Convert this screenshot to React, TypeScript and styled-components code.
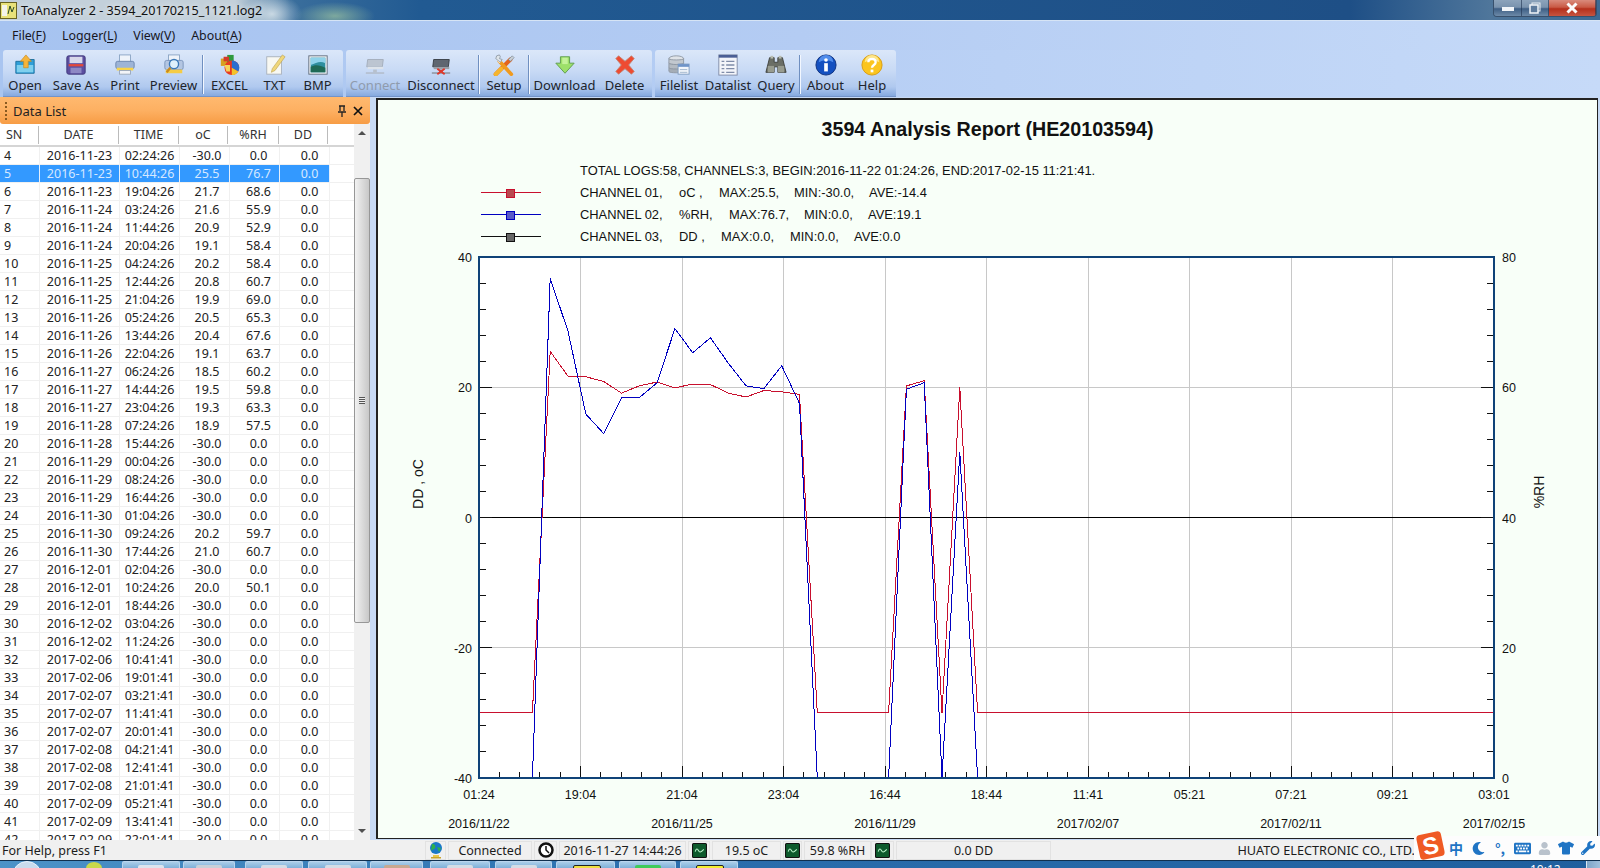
import React from "react";
import styled, { createGlobalStyle } from "styled-components";
import { FaMoon, FaKeyboard, FaTshirt, FaWrench, FaUser } from "react-icons/fa";

const GlobalStyle = createGlobalStyle`
	html, body {
		margin: 0;
		padding: 0;
		background: #c8daf5;
	}
	* {
		box-sizing: border-box;
	}
`;

const UI_FONT = `"Noto Sans", "Open Sans", sans-serif`;
const CHART_FONT = `"Liberation Sans", Arial, sans-serif`;

const Window = styled.div`
	width: 1600px;
	height: 868px;
	overflow: hidden;
	position: relative;
	display: flex;
	flex-direction: column;
	font-family: ${UI_FONT};
	font-size: 12.5px;
	color: #1c1c1c;
`;

const TitleBar = styled.div`
	height: 21px;
	flex: none;
	display: flex;
	align-items: flex-start;
	justify-content: space-between;
	padding: 0 3px 0 0;
	border-bottom: 1px solid #d6e4f5;
	background:
		radial-gradient(ellipse 40px 14px at 335px 16px, rgba(150, 190, 160, 0.75), transparent),
		radial-gradient(ellipse 30px 20px at 272px 14px, rgba(225, 235, 240, 0.8), transparent),
		linear-gradient(90deg, #c3d0da 0, #c3d0da 235px, #3a6e9c 290px, #215a92 420px, #1e4f86 1350px, #4f769b 1490px, #3d6a94 1600px);
`;

const TitleLeft = styled.div`
	display: flex;
	align-items: center;
	height: 20px;
	gap: 4px;
`;

const TitleText = styled.span`
	font-size: 12.6px;
	color: #111;
	text-shadow: 0 0 6px #fff;
	white-space: nowrap;
`;

const WindowButtons = styled.div`
	display: flex;
	height: 17px;
	border: 1px solid #38506c;
	border-top: none;
	border-radius: 0 0 4px 4px;
	overflow: hidden;
`;

const WindowButton = styled.div<{ $w: number; $close?: boolean }>`
	width: ${(p) => p.$w}px;
	display: flex;
	align-items: center;
	justify-content: center;
	border-right: 1px solid rgba(30, 50, 80, 0.6);
	background: ${(p) =>
		p.$close
			? "linear-gradient(#d98b7c 0, #c95a45 45%, #b5301c 55%, #c65440 100%)"
			: "linear-gradient(#8ca3bb 0, #7a93ae 45%, #3e5f85 55%, #6d8aa8 100%)"};
`;

const MenuBar = styled.div`
	height: 29px;
	flex: none;
	display: flex;
	align-items: center;
	padding-left: 12px;
	gap: 16px;
	background: linear-gradient(90deg, #a6c3f0 0, #b4ccf3 800px, #c6daf8 1600px);
`;

const MenuItem = styled.span`
	font-size: 12.4px;
	color: #17171f;
	u {
		text-underline-offset: 2px;
	}
`;

const ToolbarRow = styled.div`
	height: 47px;
	flex: none;
	display: flex;
	padding-left: 3px;
	gap: 3px;
	background: linear-gradient(90deg, #a9c5f0 0, #b6cef4 800px, #c6daf8 1600px);
`;

const Band = styled.div<{ $w: number }>`
	width: ${(p) => p.$w}px;
	height: 47px;
	display: flex;
	border-radius: 3px 3px 0 0;
	background: linear-gradient(#dbe7f9 0, #c8daf5 45%, #b0c9ef 80%, #86a9df 100%);
	border-bottom: 1px solid #7393c8;
`;

const ToolButton = styled.div<{ $w: number; $off?: boolean }>`
	width: ${(p) => p.$w}px;
	display: flex;
	flex-direction: column;
	align-items: center;
	padding-top: 4px;
	font-size: 13px;
	line-height: 18px;
	white-space: nowrap;
	color: ${(p) => (p.$off ? "#8f9bad" : "#20242c")};
	svg {
		display: block;
		flex: none;
	}
`;

const ToolSeparator = styled.div`
	width: 2px;
	margin: 5px 0 2px;
	flex: none;
	background: linear-gradient(90deg, #6f8fc0 50%, #f2f7ff 50%);
`;

const Main = styled.div`
	flex: 1;
	min-height: 0;
	display: flex;
	background: #c8daf5;
`;

const Sidebar = styled.div`
	width: 370px;
	flex: none;
	display: flex;
	flex-direction: column;
	background: #fff;
`;

const PanelHeader = styled.div`
	height: 27px;
	flex: none;
	display: flex;
	align-items: center;
	padding: 0 7px 0 5px;
	gap: 6px;
	border-radius: 0 0 3px 3px;
	background: linear-gradient(#ffb96f 0, #fdb062 50%, #f79c45 100%);
	font-size: 13px;
`;

const Grip = styled.div`
	width: 2px;
	height: 18px;
	background: repeating-linear-gradient(#8a5a20 0 2px, transparent 2px 4px);
`;

const HeaderTitle = styled.span`
	flex: 1;
	color: #222;
`;

const PanelAction = styled.div`
	width: 10px;
	display: flex;
	align-items: center;
	justify-content: center;
`;

const ListArea = styled.div`
	flex: 1;
	min-height: 0;
	display: flex;
`;

const ListBody = styled.div`
	width: 354px;
	overflow: hidden;
	background: #fff;
`;

const HeaderRow = styled.div`
	height: 23px;
	display: flex;
	align-items: center;
	border-bottom: 2px solid #d5d5d5;
	color: #333;
`;

const HeaderCell = styled.div<{ $w: number; $left?: boolean }>`
	width: ${(p) => p.$w}px;
	height: 18px;
	line-height: 17px;
	text-align: ${(p) => (p.$left ? "left" : "center")};
	padding-left: ${(p) => (p.$left ? "6px" : "0")};
	border-right: 1px solid #bbb;
`;

const Row = styled.div<{ $selected?: boolean }>`
	height: 18px;
	display: flex;
	border-bottom: 1px solid #f0f0f0;
	color: ${(p) => (p.$selected ? "#d6e8ff" : "#222")};
`;

const Cell = styled.div<{ $w: number; $shift?: number; $selected?: boolean; $left?: boolean }>`
	width: ${(p) => p.$w}px;
	line-height: 18px;
	text-align: ${(p) => (p.$left ? "left" : "center")};
	padding-left: ${(p) => (p.$left ? "4px" : `${p.$shift ?? 0}px`)};
	border-right: 1px solid ${(p) => (p.$selected ? "#e4effc" : "#f0f0f0")};
	background: ${(p) => (p.$selected ? "#3399ff" : "transparent")};
	white-space: nowrap;
`;

const ScrollBar = styled.div`
	width: 16px;
	flex: none;
	display: flex;
	flex-direction: column;
	align-items: center;
	background: #f0f0f0;
`;

const ScrollArrow = styled.div<{ $down?: boolean }>`
	height: 18px;
	flex: none;
	display: flex;
	align-items: center;
	justify-content: center;
	&::after {
		content: "";
		border-left: 4px solid transparent;
		border-right: 4px solid transparent;
		border-${(p) => (p.$down ? "top" : "bottom")}: 4px solid #505050;
	}
`;

const ScrollTrack = styled.div`
	flex: 1;
	width: 100%;
	padding-top: 36px;
`;

const ScrollThumb = styled.div`
	height: 445px;
	width: 16px;
	display: flex;
	align-items: center;
	justify-content: center;
	border: 1px solid #979797;
	border-radius: 2px;
	background: linear-gradient(90deg, #f2f2f2, #dcdcdc 50%, #c8c8c8);
`;

const ThumbGrip = styled.div`
	width: 6px;
	height: 7px;
	background: repeating-linear-gradient(#555 0 1px, #eee 1px 2px);
`;

const ChartPanel = styled.div`
	width: 1222px;
	height: 741px;
	margin: 1px 0 0 6px;
	flex: none;
	display: flex;
	flex-direction: column;
	border: 2px solid #222;
	border-bottom-width: 1px;
	border-right-width: 1px;
	background: #f8fff8;
	font-family: ${CHART_FONT};
	color: #111;
`;

const ChartTitle = styled.div`
	text-align: center;
	font-weight: 700;
	font-size: 19.7px;
	line-height: 24px;
	margin-top: 17px;
	height: 42px;
`;

const Legend = styled.div`
	display: grid;
	grid-template-columns: 60px 1fr;
	column-gap: 39px;
	padding-left: 103px;
	font-size: 12.9px;
	grid-auto-rows: 22px;
	align-items: center;
`;

const LegendSwatch = styled.div<{ $color: string; $fill: string }>`
	height: 1px;
	position: relative;
	background: ${(p) => p.$color};
	&::after {
		content: "";
		position: absolute;
		left: 25px;
		top: -3px;
		width: 7px;
		height: 7px;
		border: 1px solid ${(p) => p.$color};
		background: ${(p) => p.$fill};
	}
`;

const LegendText = styled.div`
	grid-column: 2;
	white-space: pre;
`;

const LegendLabel = styled.span<{ $w: number }>`
	display: inline-block;
	width: ${(p) => p.$w}px;
`;

const PlotSvg = styled.svg`
	display: block;
	flex: none;
	text {
		font-family: ${CHART_FONT};
		font-size: 12.5px;
		fill: #111;
	}
	text.axis-name {
		font-size: 14px;
	}
`;

const StatusBar = styled.div`
	height: 20px;
	flex: none;
	display: flex;
	align-items: center;
	background: #f0f0f0;
	padding-left: 2px;
`;

const StatusHelp = styled.div`
	width: 423px;
	flex: none;
	font-size: 12.5px;
`;

const StatusPane = styled.div<{ $w: number; $tight?: boolean }>`
	width: ${(p) => p.$w}px;
	height: 19px;
	margin-right: ${(p) => (p.$tight ? 0 : 2)}px;
	flex: none;
	display: flex;
	align-items: center;
	justify-content: center;
	border: 1px solid #e2e2e2;
	white-space: nowrap;
	overflow: hidden;
`;

const StatusCompany = styled.div`
	flex: 1;
	text-align: right;
	padding-right: 185px;
	font-size: 12.7px;
	white-space: nowrap;
`;

const ImeBar = styled.div`
	position: absolute;
	right: 0;
	top: 836px;
	width: 186px;
	height: 24px;
	display: flex;
	align-items: center;
	padding-left: 31px;
	background: #fdfdfd;
	color: #1f74c4;
	font-size: 15px;
`;

const ImeSlot = styled.div`
	width: 22px;
	flex: none;
	display: flex;
	align-items: center;
	justify-content: center;
	svg {
		display: block;
	}
`;

const ImeLogo = styled.div`
	position: absolute;
	left: 4px;
	top: -3px;
	width: 25px;
	height: 25px;
	border-radius: 4px;
	transform: rotate(-12deg);
	background: #ef5a24;
	color: #fff;
	font-family: ${CHART_FONT};
	font-weight: 700;
	font-size: 24px;
	line-height: 25px;
	text-align: center;
`;

const ImeGlyph = styled.span`
	font-family: "Noto Sans CJK SC", sans-serif;
	font-weight: 700;
	font-size: 14px;
	line-height: 16px;
`;

const Taskbar = styled.div`
	height: 8px;
	flex: none;
	display: flex;
	overflow: hidden;
	background: linear-gradient(90deg, #4c93c8, #2b6fae 40%, #1f5f9e 100%);
	border-top: 1px solid #10304f;
`;

const StartOrb = styled.div`
	width: 122px;
	flex: none;
	position: relative;
	&::before {
		content: "";
		position: absolute;
		left: 12px;
		top: 0;
		width: 28px;
		height: 28px;
		border-radius: 50%;
		background: #c9dcee;
		border: 1px solid #e8f2fb;
	}
	&::after {
		content: "";
		position: absolute;
		left: 86px;
		top: 1px;
		width: 16px;
		height: 12px;
		border-radius: 50%;
		background: #c8d84a;
	}
`;

const TaskButton = styled.div<{ $w: number; $gap?: number; $tint?: string; $outlined?: boolean }>`
	width: ${(p) => p.$w}px;
	margin-right: ${(p) => p.$gap ?? 4}px;
	flex: none;
	position: relative;
	border: 1px solid #b9d5ee;
	border-bottom: none;
	border-radius: 2px 2px 0 0;
	background: linear-gradient(#a9cde9, #7fb0d8);
	&::after {
		content: "";
		position: absolute;
		left: 50%;
		top: 3px;
		width: 26px;
		height: 10px;
		margin-left: -13px;
		background: ${(p) => p.$tint ?? "#d5dde6"};
		border: ${(p) => (p.$outlined ? "1px solid #222" : "none")};
		border-radius: 2px;
	}
`;

const TrayClock = styled.div`
	margin-left: auto;
	width: 56px;
	margin-top: 2px;
	color: #fff;
	font-size: 12px;
	line-height: 14px;
`;

const ShowDesktop = styled.div`
	width: 14px;
	flex: none;
	background: linear-gradient(90deg, #7ea5c8, #9fbfdb);
	border-left: 1px solid #dce8f2;
`;

type Sample = [number, string, string, number, number];

// one entry per log, sn starts at 1
const LOGS: number[][] = [
	[-30, 0], [-30, 0], [-30, 0], [-30, 0],
	[25.5, 76.7], [21.7, 68.6], [21.6, 55.9], [20.9, 52.9], [19.1, 58.4], [20.2, 58.4],
	[20.8, 60.7], [19.9, 69.0], [20.5, 65.3], [20.4, 67.6], [19.1, 63.7], [18.5, 60.2],
	[19.5, 59.8], [19.3, 63.3], [18.9, 57.5],
	[-30, 0], [-30, 0], [-30, 0], [-30, 0], [-30, 0],
	[20.2, 59.7], [21.0, 60.7], [-30, 0], [20.0, 50.1],
];

const DATA: Sample[] = [
	[4, "2016-11-23", "02:24:26", -30, 0],
	[5, "2016-11-23", "10:44:26", 25.5, 76.7],
	[6, "2016-11-23", "19:04:26", 21.7, 68.6],
	[7, "2016-11-24", "03:24:26", 21.6, 55.9],
	[8, "2016-11-24", "11:44:26", 20.9, 52.9],
	[9, "2016-11-24", "20:04:26", 19.1, 58.4],
	[10, "2016-11-25", "04:24:26", 20.2, 58.4],
	[11, "2016-11-25", "12:44:26", 20.8, 60.7],
	[12, "2016-11-25", "21:04:26", 19.9, 69.0],
	[13, "2016-11-26", "05:24:26", 20.5, 65.3],
	[14, "2016-11-26", "13:44:26", 20.4, 67.6],
	[15, "2016-11-26", "22:04:26", 19.1, 63.7],
	[16, "2016-11-27", "06:24:26", 18.5, 60.2],
	[17, "2016-11-27", "14:44:26", 19.5, 59.8],
	[18, "2016-11-27", "23:04:26", 19.3, 63.3],
	[19, "2016-11-28", "07:24:26", 18.9, 57.5],
	[20, "2016-11-28", "15:44:26", -30, 0],
	[21, "2016-11-29", "00:04:26", -30, 0],
	[22, "2016-11-29", "08:24:26", -30, 0],
	[23, "2016-11-29", "16:44:26", -30, 0],
	[24, "2016-11-30", "01:04:26", -30, 0],
	[25, "2016-11-30", "09:24:26", 20.2, 59.7],
	[26, "2016-11-30", "17:44:26", 21.0, 60.7],
	[27, "2016-12-01", "02:04:26", -30, 0],
	[28, "2016-12-01", "10:24:26", 20.0, 50.1],
	[29, "2016-12-01", "18:44:26", -30, 0],
	[30, "2016-12-02", "03:04:26", -30, 0],
	[31, "2016-12-02", "11:24:26", -30, 0],
	[32, "2017-02-06", "10:41:41", -30, 0],
	[33, "2017-02-06", "19:01:41", -30, 0],
	[34, "2017-02-07", "03:21:41", -30, 0],
	[35, "2017-02-07", "11:41:41", -30, 0],
	[36, "2017-02-07", "20:01:41", -30, 0],
	[37, "2017-02-08", "04:21:41", -30, 0],
	[38, "2017-02-08", "12:41:41", -30, 0],
	[39, "2017-02-08", "21:01:41", -30, 0],
	[40, "2017-02-09", "05:21:41", -30, 0],
	[41, "2017-02-09", "13:41:41", -30, 0],
	[42, "2017-02-09", "22:01:41", -30, 0],
];

const PLOT = { left: 479, right: 1494, top: 257, bottom: 778 };
const STEP = (PLOT.right - PLOT.left) / 57;
const snX = (i: number) => PLOT.left + i * STEP;
const tempY = (v: number) => 517.5 - v * ((PLOT.bottom - PLOT.top) / 80);
const rhY = (v: number) => PLOT.bottom - v * ((PLOT.bottom - PLOT.top) / 80);

const series = (pick: (r: number[]) => number) => {
	const pts = LOGS.map((r, i) => `${snX(i).toFixed(1)},${pick(r).toFixed(1)}`);
	// everything after the last real sample stays at the floor value
	pts.push(`${snX(28).toFixed(1)},${pick([-30, 0]).toFixed(1)}`);
	pts.push(`${PLOT.right},${pick([-30, 0]).toFixed(1)}`);
	return pts.join(" ");
};

const XLABELS = ["01:24", "19:04", "21:04", "23:04", "16:44", "18:44", "11:41", "05:21", "07:21", "09:21", "03:01"];
const DATELABELS = ["2016/11/22", "2016/11/25", "2016/11/29", "2017/02/07", "2017/02/11", "2017/02/15"];
const LEFT_LABELS = ["40", "20", "0", "-20", "-40"];
const RIGHT_LABELS = ["80", "60", "40", "20", "0"];

const Plot = () => {
	const { left, right, top, bottom } = PLOT;
	const h = bottom - top;
	const w = right - left;
	const ticksY = Array.from({ length: 21 }, (_, i) => i).map((i) => top + (i * h) / 20);
	const ticksX = Array.from({ length: 51 }, (_, i) => i).map((i) => left + (i * w) / 50);
	return (
		<PlotSvg width={1219} height={591} viewBox="378 247 1219 591" shapeRendering="crispEdges">
			<rect x={left} y={top} width={w} height={h} fill="#fff" />
			{[0, 1, 2, 3, 4, 5, 6, 7, 8, 9, 10].map((i) => (
				<line key={i} x1={left + (i * w) / 10} x2={left + (i * w) / 10} y1={top} y2={bottom} stroke="#c8c8c8" />
			))}
			<line x1={left} x2={right} y1={387} y2={387} stroke="#c8c8c8" />
			<line x1={left} x2={right} y1={647.5} y2={647.5} stroke="#c8c8c8" />
			<line x1={left} x2={right} y1={517.5} y2={517.5} stroke="#000" />
			{ticksY.map((y, i) => {
				const len = i % 5 === 0 ? 13 : 7;
				return (
					<g key={i} stroke="#111">
						<line x1={left} x2={left + len} y1={y} y2={y} />
						<line x1={right - len} x2={right} y1={y} y2={y} />
					</g>
				);
			})}
			{ticksX.map((x, i) => (
				<line key={i} x1={x} x2={x} y1={bottom - (i % 5 === 0 ? 12 : 6)} y2={bottom} stroke="#111" />
			))}
			<polyline points={series((r) => tempY(r[0]))} fill="none" stroke="#c8102e" />
			<polyline points={series((r) => rhY(r[1]))} fill="none" stroke="#0000c0" />
			<rect x={left} y={top} width={w} height={h} fill="none" stroke="#0f4378" strokeWidth={2.5} />
			{LEFT_LABELS.map((t, i) => (
				<text key={t} x={472} y={top + (i * h) / 4 + 5} textAnchor="end">{t}</text>
			))}
			{RIGHT_LABELS.map((t, i) => (
				<text key={t} x={1502} y={top + (i * h) / 4 + 5}>{t}</text>
			))}
			{XLABELS.map((t, i) => (
				<text key={t} x={left + (i * w) / 10} y={799} textAnchor="middle">{t}</text>
			))}
			{DATELABELS.map((t, i) => (
				<text key={t} x={left + (i * w) / 5} y={828} textAnchor="middle">{t}</text>
			))}
			<text className="axis-name" x={0} y={0} textAnchor="middle" transform="translate(423 484) rotate(-90)">DD , oC</text>
			<text className="axis-name" x={0} y={0} textAnchor="middle" transform="translate(1544 492) rotate(-90)">%RH</text>
		</PlotSvg>
	);
};

const Icon: React.FC<{ children: React.ReactNode; size?: number }> = ({ children, size = 22 }) => (
	<svg width={size} height={size} viewBox="0 0 24 24">{children}</svg>
);

const OpenIcon = () => (
	<Icon>
		<path d="M2 8h7l2-2h11v15H2z" fill="#2f9fd8" stroke="#1b6e9e" />
		<path d="M3 12h18v8H3z" fill="#7fd0ee" />
		<path d="M13 1l6 7h-3.500v7h-5V8H7z" fill="#f5b53a" stroke="#c9861a" strokeWidth=".7" />
	</Icon>
);
const SaveIcon = () => (
	<Icon>
		<rect x="2" y="2" width="20" height="20" rx="2" fill="#5c4fa0" stroke="#3c3478" />
		<rect x="5" y="3" width="14" height="7" fill="#d8d8ea" />
		<rect x="4" y="11" width="16" height="2.500" fill="#e2483a" />
		<rect x="6" y="15" width="12" height="6" fill="#8e88c4" />
	</Icon>
);
const PrintIcon = () => (
	<Icon>
		<rect x="6" y="1" width="12" height="8" fill="#eef3fa" stroke="#8aa4c4" />
		<rect x="2" y="8" width="20" height="8" rx="2" fill="#9db4d6" stroke="#6b86ad" />
		<rect x="3" y="15" width="18" height="3" fill="#f7d34a" />
		<rect x="6" y="18" width="12" height="4" fill="#f2f4f8" stroke="#9aa8ba" />
	</Icon>
);
const PreviewIcon = () => (
	<Icon>
		<rect x="6" y="1" width="12" height="7" fill="#eef3fa" stroke="#8aa4c4" />
		<rect x="2" y="7" width="20" height="10" rx="2" fill="#b4c6e2" stroke="#7a94bb" />
		<rect x="3" y="17" width="18" height="4" fill="#f5cc45" />
		<circle cx="12" cy="11" r="5" fill="#dff0fb" stroke="#3a78b8" strokeWidth="1.500" />
		<path d="M8 15l-4 5" stroke="#c98a1e" strokeWidth="2.500" />
	</Icon>
);
const ExcelIcon = () => (
	<Icon>
		<rect x="2" y="5" width="8" height="8" fill="#d8a020" />
		<rect x="9" y="1" width="7" height="9" fill="#2f9a3e" />
		<rect x="5" y="3" width="6" height="5" fill="#d33a2a" />
		<circle cx="14" cy="15" r="8" fill="#e83a20" />
		<path d="M14 15V7a8 8 0 0 1 7 12z" fill="#2b6fd0" />
		<path d="M14 15l7 4a8 8 0 0 1-7 4z" fill="#f3c32c" />
		<path d="M6 12h6v7H8z" fill="#f5d35c" />
	</Icon>
);
const TxtIcon = () => (
	<Icon>
		<rect x="3" y="3" width="16" height="19" fill="#f8f8f2" stroke="#a9b1bb" />
		<path d="M9 16L20 1l3 2L12 18l-4 2z" fill="#f0d77a" stroke="#b59a45" strokeWidth=".6" />
	</Icon>
);
const BmpIcon = () => (
	<Icon>
		<rect x="2" y="2" width="20" height="20" fill="#f2f4f6" stroke="#5e6c7c" />
		<rect x="4" y="4" width="16" height="16" fill="#2f8f9e" />
		<path d="M4 4h16v6c-6-3-10 0-16 2z" fill="#8fd2ea" />
		<path d="M4 14c5-3 10-2 16 1v5H4z" fill="#1f6a55" />
	</Icon>
);
const DeviceIcon: React.FC<{ off?: boolean }> = ({ off }) => (
	<Icon>
		<path d="M4 6h17l-1 8H3z" fill={off ? "#bcc5d1" : "#5f6670"} stroke={off ? "#a3adba" : "#383d44"} />
		<rect x="4" y="14" width="17" height="2.500" fill={off ? "#dde3ea" : "#9aa0a8"} />
		<rect x="10" y="17" width="4" height="3" fill={off ? "#b7c0cc" : "#80868e"} />
		<rect x="2" y="20" width="20" height="1.500" fill={off ? "#b0bac6" : "#8a9099"} />
		{!off && <path d="M8 16l8 6M16 16l-8 6" stroke="#e0372a" strokeWidth="2" />}
	</Icon>
);
const SetupIcon = () => (
	<Icon>
		<path d="M3 22L19 6" stroke="#e2641e" strokeWidth="4.500" strokeLinecap="round" />
		<path d="M3 22l6-6" stroke="#f5b52e" strokeWidth="4.500" strokeLinecap="round" />
		<path d="M20 22L7 8" stroke="#f09a1f" strokeWidth="4" strokeLinecap="round" />
		<path d="M8 9L4 3" stroke="#fff" strokeWidth="3" />
		<path d="M8 9L3 5a4 4 0 0 1 4-4l1 2-1 2 3 1z" fill="#dfe5ea" stroke="#7f8a96" strokeWidth=".8" />
		<path d="M21 2l2 2-4 4-2-2z" fill="#c9d1d8" stroke="#7f8a96" strokeWidth=".8" />
	</Icon>
);
const DownloadIcon = () => (
	<Icon>
		<path d="M7 3h10v7h5L12 21 2 10h5z" fill="#9de06a" stroke="#5c9a4c" />
		<path d="M9 4h6v7h-6z" fill="#c4f29a" />
	</Icon>
);
const DeleteIcon = () => (
	<Icon>
		<path
			d="M5 2l7 6 7-6 3 3-6 7 6 7-3 3-7-6-7 6-3-3 6-7-6-7z"
			fill="#ee4b32"
			stroke="#c4816e"
		/>
	</Icon>
);
const FilelistIcon = () => (
	<Icon>
		<ellipse cx="9" cy="5" rx="8" ry="3" fill="#dfe3e8" stroke="#8f98a3" />
		<path d="M1 5v5c0 2 16 2 16 0V5c0 2-16 2-16 0z" fill="#c2c8cf" stroke="#8f98a3" />
		<path d="M1 10v5c0 2 16 2 16 0v-5c0 2-16 2-16 0z" fill="#b3bac2" stroke="#8f98a3" />
		<path d="M1 15v4c0 2 16 2 16 0v-4c0 2-16 2-16 0z" fill="#a5adb6" stroke="#8f98a3" />
		<rect x="11" y="11" width="12" height="11" fill="#f2f6fb" stroke="#7f9cc0" />
		<rect x="11" y="11" width="12" height="3" fill="#6f94c8" />
		<path d="M13 17h8M13 20h8" stroke="#9fb3cc" />
	</Icon>
);
const DatalistIcon = () => (
	<Icon>
		<rect x="2" y="1" width="20" height="22" fill="#f3f5fa" stroke="#7e89a6" />
		<rect x="2" y="1" width="20" height="3" fill="#4b5f95" />
		<path d="M5 8h3M10 8h9M5 12h3M10 12h9M5 16h3M10 16h9M5 20h3M10 20h9" stroke="#7f8ca8" strokeWidth="1.400" />
	</Icon>
);
const QueryIcon = () => (
	<Icon>
		<path d="M5 4h5v5h4V4h5l4 16h-9v-6h-4v6H1z" fill="#6a6e66" stroke="#3c3e3a" />
		<rect x="3" y="13" width="7" height="7" fill="#989c90" />
		<rect x="14" y="13" width="7" height="7" fill="#989c90" />
		<rect x="6" y="2" width="3" height="3" fill="#b8bcb0" />
		<rect x="15" y="2" width="3" height="3" fill="#b8bcb0" />
	</Icon>
);
const AboutIcon = () => (
	<Icon>
		<circle cx="12" cy="12" r="11" fill="#1450c0" stroke="#0c2f7c" />
		<path d="M4 9a8 8 0 0 1 16 0c-5-3-11-3-16 0z" fill="#4f8ceb" />
		<circle cx="12" cy="6.500" r="2" fill="#fff" />
		<rect x="10" y="10" width="4" height="9" fill="#fff" />
	</Icon>
);
const HelpIcon = () => (
	<Icon>
		<circle cx="12" cy="12" r="11" fill="#fbc51f" stroke="#d69a12" />
		<path d="M4 9a8 8 0 0 1 16 0c-5-3-11-3-16 0z" fill="#fde68a" />
		<path d="M8 9c0-5 8-5 8 0 0 3-4 3-4 6" fill="none" stroke="#fff" strokeWidth="2.500" />
		<rect x="10.500" y="17" width="3" height="3" fill="#fff" />
	</Icon>
);

const AppIcon = () => (
	<svg width="17" height="17" viewBox="0 0 17 17">
		<rect x=".5" y=".5" width="16" height="16" fill="#e8e27a" stroke="#6a6420" />
		<rect x="2" y="3" width="5" height="11" fill="#f4f4ea" />
		<path d="M8 12l2-8 2 6 2-5" fill="none" stroke="#2a4c28" />
	</svg>
);

const GlobeIcon = () => (
	<svg width="16" height="18" viewBox="0 0 16 18">
		<circle cx="8" cy="7" r="6" fill="#1a78c8" />
		<path d="M4 3c3 0 4 2 3 4s-3 1-4 3M9 6l4 1-2 4z" fill="#2eb24a" />
		<path d="M5 14h6v2H5z" fill="#e8c84c" />
		<path d="M3 16h10v1.500H3z" fill="#c9a42c" />
	</svg>
);

const ClockIcon = () => (
	<svg width="16" height="16" viewBox="0 0 16 16">
		<circle cx="8" cy="8" r="6.500" fill="#fff" stroke="#111" strokeWidth="2.500" />
		<path d="M8 4v4l3 3" fill="none" stroke="#111" strokeWidth="1.500" />
	</svg>
);

const TrendIcon = () => (
	<svg width="15" height="15" viewBox="0 0 14 14">
		<rect x=".5" y=".5" width="13" height="13" rx="1" fill="#0d5a2c" stroke="#111" />
		<path d="M3 8c1-3 2-3 3-1s2 2 5-1" fill="none" stroke="#b8f2c8" />
	</svg>
);

const PinIcon = () => (
	<svg width="10" height="12" viewBox="0 0 10 12">
		<path d="M2 1h6M3 1v5M7 1v5M1 7h8M5 7v5" stroke="#222" strokeWidth="1.300" fill="none" />
	</svg>
);

const CloseIcon = () => (
	<svg width="10" height="10" viewBox="0 0 10 10">
		<path d="M1 1l8 8M9 1l-8 8" stroke="#111" strokeWidth="1.700" />
	</svg>
);

const TOOL_BANDS = [
	{
		w: 340,
		items: [
			{ label: "Open", w: 44, icon: <OpenIcon /> },
			{ label: "Save As", w: 58, icon: <SaveIcon /> },
			{ label: "Print", w: 40, icon: <PrintIcon /> },
			{ label: "Preview", w: 57, icon: <PreviewIcon /> },
			{ sep: true },
			{ label: "EXCEL", w: 51, icon: <ExcelIcon /> },
			{ label: "TXT", w: 39, icon: <TxtIcon /> },
			{ label: "BMP", w: 47, icon: <BmpIcon /> },
		],
	},
	{
		w: 306,
		items: [
			{ label: "Connect", w: 58, off: true, icon: <DeviceIcon off /> },
			{ label: "Disconnect", w: 74, icon: <DeviceIcon /> },
			{ sep: true },
			{ label: "Setup", w: 48, icon: <SetupIcon /> },
			{ sep: true },
			{ label: "Download", w: 69, icon: <DownloadIcon /> },
			{ label: "Delete", w: 51, icon: <DeleteIcon /> },
		],
	},
	{
		w: 241,
		items: [
			{ label: "Filelist", w: 48, icon: <FilelistIcon /> },
			{ label: "Datalist", w: 50, icon: <DatalistIcon /> },
			{ label: "Query", w: 46, icon: <QueryIcon /> },
			{ sep: true },
			{ label: "About", w: 49, icon: <AboutIcon /> },
			{ label: "Help", w: 44, icon: <HelpIcon /> },
		],
	},
];

const MENUS: [string, string][] = [
	["File(", "F"],
	["Logger(", "L"],
	["View(", "V"],
	["About(", "A"],
];

const COLUMNS = [
	{ name: "SN", w: 40, hw: 39, left: true },
	{ name: "DATE", w: 80, hw: 80 },
	{ name: "TIME", w: 60, hw: 60 },
	{ name: "oC", w: 50, hw: 49, shift: 5 },
	{ name: "%RH", w: 50, hw: 51, shift: 8 },
	{ name: "DD", w: 50, hw: 49, shift: 10 },
];

const App: React.FC = () => (
	<>
		<GlobalStyle />
		<Window>
			<TitleBar>
				<TitleLeft>
					<AppIcon />
					<TitleText>ToAnalyzer 2 - 3594_20170215_1121.log2</TitleText>
				</TitleLeft>
				<WindowButtons>
					<WindowButton $w={28}>
						<svg width="12" height="5"><rect width="12" height="4" y="1" fill="#f0f4f8" /></svg>
					</WindowButton>
					<WindowButton $w={27}>
						<svg width="12" height="12" viewBox="0 0 12 12">
							<rect x="3" y="1" width="8" height="8" fill="none" stroke="#e8eef4" />
							<rect x="1" y="3" width="8" height="8" fill="#5d7b9d" stroke="#f0f4f8" strokeWidth="1.500" />
						</svg>
					</WindowButton>
					<WindowButton $w={47} $close>
						<svg width="12" height="12" viewBox="0 0 12 12">
							<path d="M1.500 1.500l9 9M10.500 1.500l-9 9" stroke="#fbfbfb" strokeWidth="3" />
						</svg>
					</WindowButton>
				</WindowButtons>
			</TitleBar>

			<MenuBar>
				{MENUS.map(([text, key]) => (
					<MenuItem key={key}>
						{text}
						<u>{key}</u>)
					</MenuItem>
				))}
			</MenuBar>

			<ToolbarRow>
				{TOOL_BANDS.map((band) => (
					<Band key={band.w} $w={band.w}>
						{band.items.map((item, i) =>
							item.sep ? (
								<ToolSeparator key={i} />
							) : (
								<ToolButton key={i} $w={item.w as number} $off={item.off}>
									{item.icon}
									{item.label}
								</ToolButton>
							)
						)}
					</Band>
				))}
			</ToolbarRow>

			<Main>
				<Sidebar>
					<PanelHeader>
						<Grip />
						<HeaderTitle>Data List</HeaderTitle>
						<PanelAction><PinIcon /></PanelAction>
						<PanelAction><CloseIcon /></PanelAction>
					</PanelHeader>
					<ListArea>
						<ListBody>
							<HeaderRow>
								{COLUMNS.map((c) => (
									<HeaderCell key={c.name} $w={c.hw} $left={c.left}>{c.name}</HeaderCell>
								))}
							</HeaderRow>
							{DATA.map(([sn, date, time, temp, rh]) => {
								const selected = sn === 5;
								const values = [String(sn), date, time, temp.toFixed(1), rh.toFixed(1), "0.0"];
								return (
									<Row key={sn} $selected={selected}>
										{COLUMNS.map((c, i) => (
											<Cell key={c.name} $w={c.w} $left={c.left} $shift={c.shift} $selected={selected}>
												{values[i]}
											</Cell>
										))}
									</Row>
								);
							})}
						</ListBody>
						<ScrollBar>
							<ScrollArrow />
							<ScrollTrack>
								<ScrollThumb>
									<ThumbGrip />
								</ScrollThumb>
							</ScrollTrack>
							<ScrollArrow $down />
						</ScrollBar>
					</ListArea>
				</Sidebar>

				<ChartPanel>
					<ChartTitle>3594 Analysis Report (HE20103594)</ChartTitle>
					<Legend>
						<LegendText>TOTAL LOGS:58, CHANNELS:3, BEGIN:2016-11-22 01:24:26, END:2017-02-15 11:21:41.</LegendText>
						<LegendSwatch $color="#c8102e" $fill="#b84a50" />
						<LegendText>
							<LegendLabel $w={99}>CHANNEL 01,</LegendLabel>
							<LegendLabel $w={40}>oC ,</LegendLabel>
							<LegendLabel $w={75}>MAX:25.5,</LegendLabel>
							<LegendLabel $w={75}>MIN:-30.0,</LegendLabel>
							AVE:-14.4
						</LegendText>
						<LegendSwatch $color="#0000c0" $fill="#5a5ac8" />
						<LegendText>
							<LegendLabel $w={99}>CHANNEL 02,</LegendLabel>
							<LegendLabel $w={50}>%RH,</LegendLabel>
							<LegendLabel $w={75}>MAX:76.7,</LegendLabel>
							<LegendLabel $w={64}>MIN:0.0,</LegendLabel>
							AVE:19.1
						</LegendText>
						<LegendSwatch $color="#111" $fill="#666" />
						<LegendText>
							<LegendLabel $w={99}>CHANNEL 03,</LegendLabel>
							<LegendLabel $w={42}>DD ,</LegendLabel>
							<LegendLabel $w={69}>MAX:0.0,</LegendLabel>
							<LegendLabel $w={64}>MIN:0.0,</LegendLabel>
							AVE:0.0
						</LegendText>
					</Legend>
					<Plot />
				</ChartPanel>
			</Main>

			<StatusBar>
				<StatusHelp>For Help, press F1</StatusHelp>
				<StatusPane $w={21}><GlobeIcon /></StatusPane>
				<StatusPane $w={84}>Connected</StatusPane>
				<StatusPane $w={23}><ClockIcon /></StatusPane>
				<StatusPane $w={127}>2016-11-27 14:44:26</StatusPane>
				<StatusPane $w={22}><TrendIcon /></StatusPane>
				<StatusPane $w={69}>19.5 oC</StatusPane>
				<StatusPane $w={19}><TrendIcon /></StatusPane>
				<StatusPane $w={67} $tight>59.8 %RH</StatusPane>
				<StatusPane $w={23}><TrendIcon /></StatusPane>
				<StatusPane $w={155}>0.0 DD</StatusPane>
				<StatusCompany>HUATO ELECTRONIC CO., LTD.</StatusCompany>
			</StatusBar>

			<ImeBar>
				<ImeLogo>S</ImeLogo>
				<ImeSlot><ImeGlyph>中</ImeGlyph></ImeSlot>
				<ImeSlot><FaMoon size={13} /></ImeSlot>
				<ImeSlot><ImeGlyph>°,</ImeGlyph></ImeSlot>
				<ImeSlot><FaKeyboard size={17} /></ImeSlot>
				<ImeSlot><FaUser size={13} color="#b9c2cc" /></ImeSlot>
				<ImeSlot><FaTshirt size={16} /></ImeSlot>
				<ImeSlot><FaWrench size={14} /></ImeSlot>
			</ImeBar>

			<Taskbar>
				<StartOrb />
				<TaskButton $w={58} $gap={3} $tint="#dde4ee" />
				<TaskButton $w={52} $gap={10} $tint="#c9d0d8" />
				<TaskButton $w={58} $gap={5} />
				<TaskButton $w={59} $gap={3} />
				<TaskButton $w={53} $gap={7} $tint="#c8a890" />
				<TaskButton $w={60} $gap={5} />
				<TaskButton $w={57} />
				<TaskButton $w={59} $tint="#f0e040" $outlined />
				<TaskButton $w={57} $tint="#3ecb5a" />
				<TaskButton $w={58} $tint="#f4ee30" $outlined />
				<TrayClock>10:12</TrayClock>
				<ShowDesktop />
			</Taskbar>
		</Window>
	</>
);

export default App;
